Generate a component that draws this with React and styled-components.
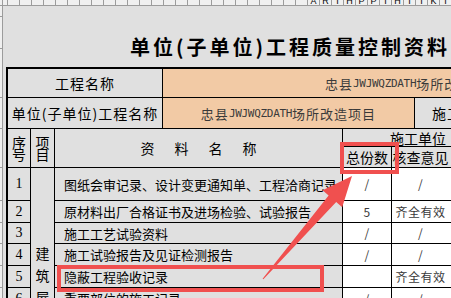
import styled, { createGlobalStyle } from "styled-components";

const COLORS = {
	bg: "#e0e0e0",
	peach: "#f2caa5",
	white: "#ffffff",
	ruler: "#f0f0f0",
	rulerLine: "#9c9c9c",
	ink: "#000000",
	soft: "#3a3a3a",
	red: "#f0504f",
};

const CJK = `"Noto Sans CJK SC", sans-serif`;

const GlobalStyle = createGlobalStyle`
	html, body {
		margin: 0;
		padding: 0;
		overflow: hidden;
		background: ${COLORS.bg};
	}
	body {
		font-family: ${CJK};
		color: ${COLORS.ink};
	}
`;

// spreadsheet column header strip, only the bottom of the letters shows
const rulerLetters = ["A", "R", "I", "H", "P", "P", "I", "H", "I", "I", "K", "I"];
const rulerCells = [3, 5, ...Array(37).fill(12)];
// row strip on the left, heights follow the sheet rows
const tickHeights = [11, 32, 49, 31, 39, 33, 22, 21, 22, 22, 22];

const rows = [
	{ no: 1, name: "图纸会审记录、设计变更通知单、工程洽商记录", count: "/", opinion: "/" },
	{ no: 2, name: "原材料出厂合格证书及进场检验、试验报告", count: "5", opinion: "齐全有效" },
	{ no: 3, name: "施工工艺试验资料", count: "/", opinion: "/" },
	{ no: 4, name: "施工试验报告及见证检测报告", count: "/", opinion: "/" },
	{ no: 5, name: "隐蔽工程验收记录", count: "", opinion: "齐全有效" },
	{ no: 6, name: "重要部位的施工记录", count: "/", opinion: "/" },
];

const ProjectName = () => (
	<>
		忠县<Latin>JWJWQZDATH</Latin>场所改造项目
	</>
);

const App = () => {
	return (
		<Screen>
			<GlobalStyle />
			<TopRuler>
				{rulerCells.map((w, i) => {
					const letter = i >= 27 ? rulerLetters[i - 27] : null;
					return (
						<RulerCell key={`rc-${i}`} w={w}>
							{letter && <RulerLetter>{letter}</RulerLetter>}
						</RulerCell>
					);
				})}
			</TopRuler>
			<Body>
				<LeftRuler>
					{tickHeights.map((h, i) => (
						<Tick key={`tick-${i}`} h={h} />
					))}
				</LeftRuler>
				<Sheet>
					<Title>单位(子单位)工程质量控制资料</Title>
					<Table>
						<LabelCell $col="1 / 4" $row="1">工程名称</LabelCell>
						<ValueCell $col="4 / 8" $row="1" $pad="0 0 0 162px" $justify="flex-start">
							<ProjectName />
						</ValueCell>

						<LabelCell $col="1 / 4" $row="2">单位(子单位)工程名称</LabelCell>
						<ValueCell $col="4 / 7" $row="2">
							<ProjectName />
						</ValueCell>
						<LabelCell $col="7" $row="2" $justify="flex-start" $pad="0 0 0 17px">
							施工
						</LabelCell>

						<HeadCell $col="1" $row="3 / 5">
							<Upright>序号</Upright>
						</HeadCell>
						<HeadCell $col="2" $row="3 / 5">
							<Upright>项目</Upright>
						</HeadCell>
						<HeadCell $col="3 / 5" $row="3 / 5" $spaced>
							资料名称
						</HeadCell>
						<HeadCell $col="5 / 8" $row="3" $justify="flex-end" $pad="0 49px 0 0">
							施工单位
						</HeadCell>
						<HeadCell $col="5" $row="4">总份数</HeadCell>
						<HeadCell $col="6 / 8" $row="4" $pad="0 46px 0 0">
							核查意见
						</HeadCell>

						<GroupCell $col="2" $row={`5 / ${5 + rows.length}`}>
							<Upright $gap>建筑屋面工程</Upright>
						</GroupCell>

						{rows.map((r, i) => {
							const line = `${5 + i}`;
							return [
								<NoCell key={`no-${r.no}`} $col="1" $row={line}>
									{r.no}
								</NoCell>,
								<NameCell key={`name-${r.no}`} $col="3 / 5" $row={line}>
									{r.name}
								</NameCell>,
								<DataCell key={`count-${r.no}`} $col="5" $row={line}>
									{r.count}
								</DataCell>,
								<DataCell key={`op-${r.no}`} $col="6 / 8" $row={line} $pad="0 46px 0 0">
									{r.opinion}
								</DataCell>,
							];
						})}
					</Table>
				</Sheet>
			</Body>

			<Markup viewBox="0 0 451 298" width="451" height="298">
				<rect x="342" y="144" width="55" height="28" fill="none" stroke={COLORS.red} strokeWidth="4" />
				<rect x="59" y="267" width="263" height="23" fill="none" stroke={COLORS.red} strokeWidth="4" />
				<polygon
					points="352,176 342.2,207.2 336.2,202 263.4,279.3 262.6,278.7 328.6,195.4 322.6,190.2"
					fill={COLORS.red}
				/>
			</Markup>
		</Screen>
	);
};

const Screen = styled.div`
	position: relative;
	width: 451px;
	height: 298px;
	overflow: hidden;
	background: ${COLORS.bg};
`;

const TopRuler = styled.div`
	display: flex;
	height: 5px;
	background: ${COLORS.ruler};
	border-bottom: 1px solid ${COLORS.rulerLine};
	overflow: hidden;
`;

const RulerCell = styled.div`
	flex: 0 0 ${(p) => p.w}px;
	height: 5px;
	box-sizing: border-box;
	border-right: 1px solid ${COLORS.rulerLine};
	overflow: hidden;
	display: flex;
	justify-content: center;
	align-items: flex-end;
`;

const RulerLetter = styled.span`
	font-family: "Liberation Sans", sans-serif;
	font-size: 9px;
	line-height: 9px;
	margin-bottom: -1px;
	color: ${COLORS.ink};
`;

const Body = styled.div`
	display: flex;
`;

const LeftRuler = styled.div`
	flex: 0 0 2px;
	display: flex;
	flex-direction: column;
	background: ${COLORS.ruler};
	border-right: 1px solid ${COLORS.rulerLine};
	height: 292px;
`;

const Tick = styled.div`
	flex: 0 0 ${(p) => p.h}px;
	box-sizing: border-box;
	border-bottom: 1px solid ${COLORS.rulerLine};
`;

const Sheet = styled.div`
	flex: 1;
	padding-left: 3px;
`;

const Title = styled.div`
	height: 61px;
	box-sizing: border-box;
	display: flex;
	align-items: flex-end;
	padding: 0 0 10px 124px;
	font-size: 20px;
	line-height: 20px;
	font-weight: 700;
	letter-spacing: 3px;
	white-space: nowrap;
`;

const Table = styled.div`
	display: grid;
	grid-template-columns: 22px 23px 107px 179px 48px 22px 80px;
	grid-template-rows: 28px 30px 17px 20px 32px 21px 20px 21px 21px 21px;
	gap: 1px;
	width: max-content;
	background: ${COLORS.ink};
	border-top: 2px solid ${COLORS.ink};
	border-left: 2px solid ${COLORS.ink};
`;

const Cell = styled.div`
	grid-column: ${(p) => p.$col};
	grid-row: ${(p) => p.$row};
	display: flex;
	align-items: center;
	justify-content: ${(p) => p.$justify || "center"};
	padding: ${(p) => p.$pad || "0"};
	background: ${COLORS.bg};
	overflow: hidden;
	white-space: nowrap;
	line-height: 1;
	min-width: 0;
`;

const LabelCell = styled(Cell)`
	font-size: 14px;
	letter-spacing: 1px;
`;

const ValueCell = styled(Cell)`
	background: ${COLORS.peach};
	font-size: 13px;
	letter-spacing: 1px;
	color: ${COLORS.soft};
`;

const Latin = styled.span`
	font-family: "DejaVu Sans Mono", monospace;
	font-size: 11px;
	letter-spacing: -0.3px;
`;

const HeadCell = styled(Cell)`
	font-size: 14px;
	letter-spacing: ${(p) => (p.$spaced ? "20px" : "0")};
	text-indent: ${(p) => (p.$spaced ? "20px" : "0")};
`;

const Upright = styled.span`
	writing-mode: vertical-rl;
	letter-spacing: ${(p) => (p.$gap ? "8px" : "-2px")};
	line-height: 1;
`;

const GroupCell = styled(Cell)`
	align-items: flex-start;
	padding-top: 79px;
	font-size: 14px;
`;

const NoCell = styled(Cell)`
	font-family: "Liberation Serif", serif;
	font-size: 14px;
`;

const NameCell = styled(Cell)`
	justify-content: flex-start;
	padding-left: 9px;
	font-size: 13px;
`;

const DataCell = styled(Cell)`
	background: ${COLORS.white};
	font-size: 12px;
	letter-spacing: 0.5px;
	color: ${COLORS.soft};
`;

const Markup = styled.svg`
	position: absolute;
	left: 0;
	top: 0;
	pointer-events: none;
`;

export default App;
